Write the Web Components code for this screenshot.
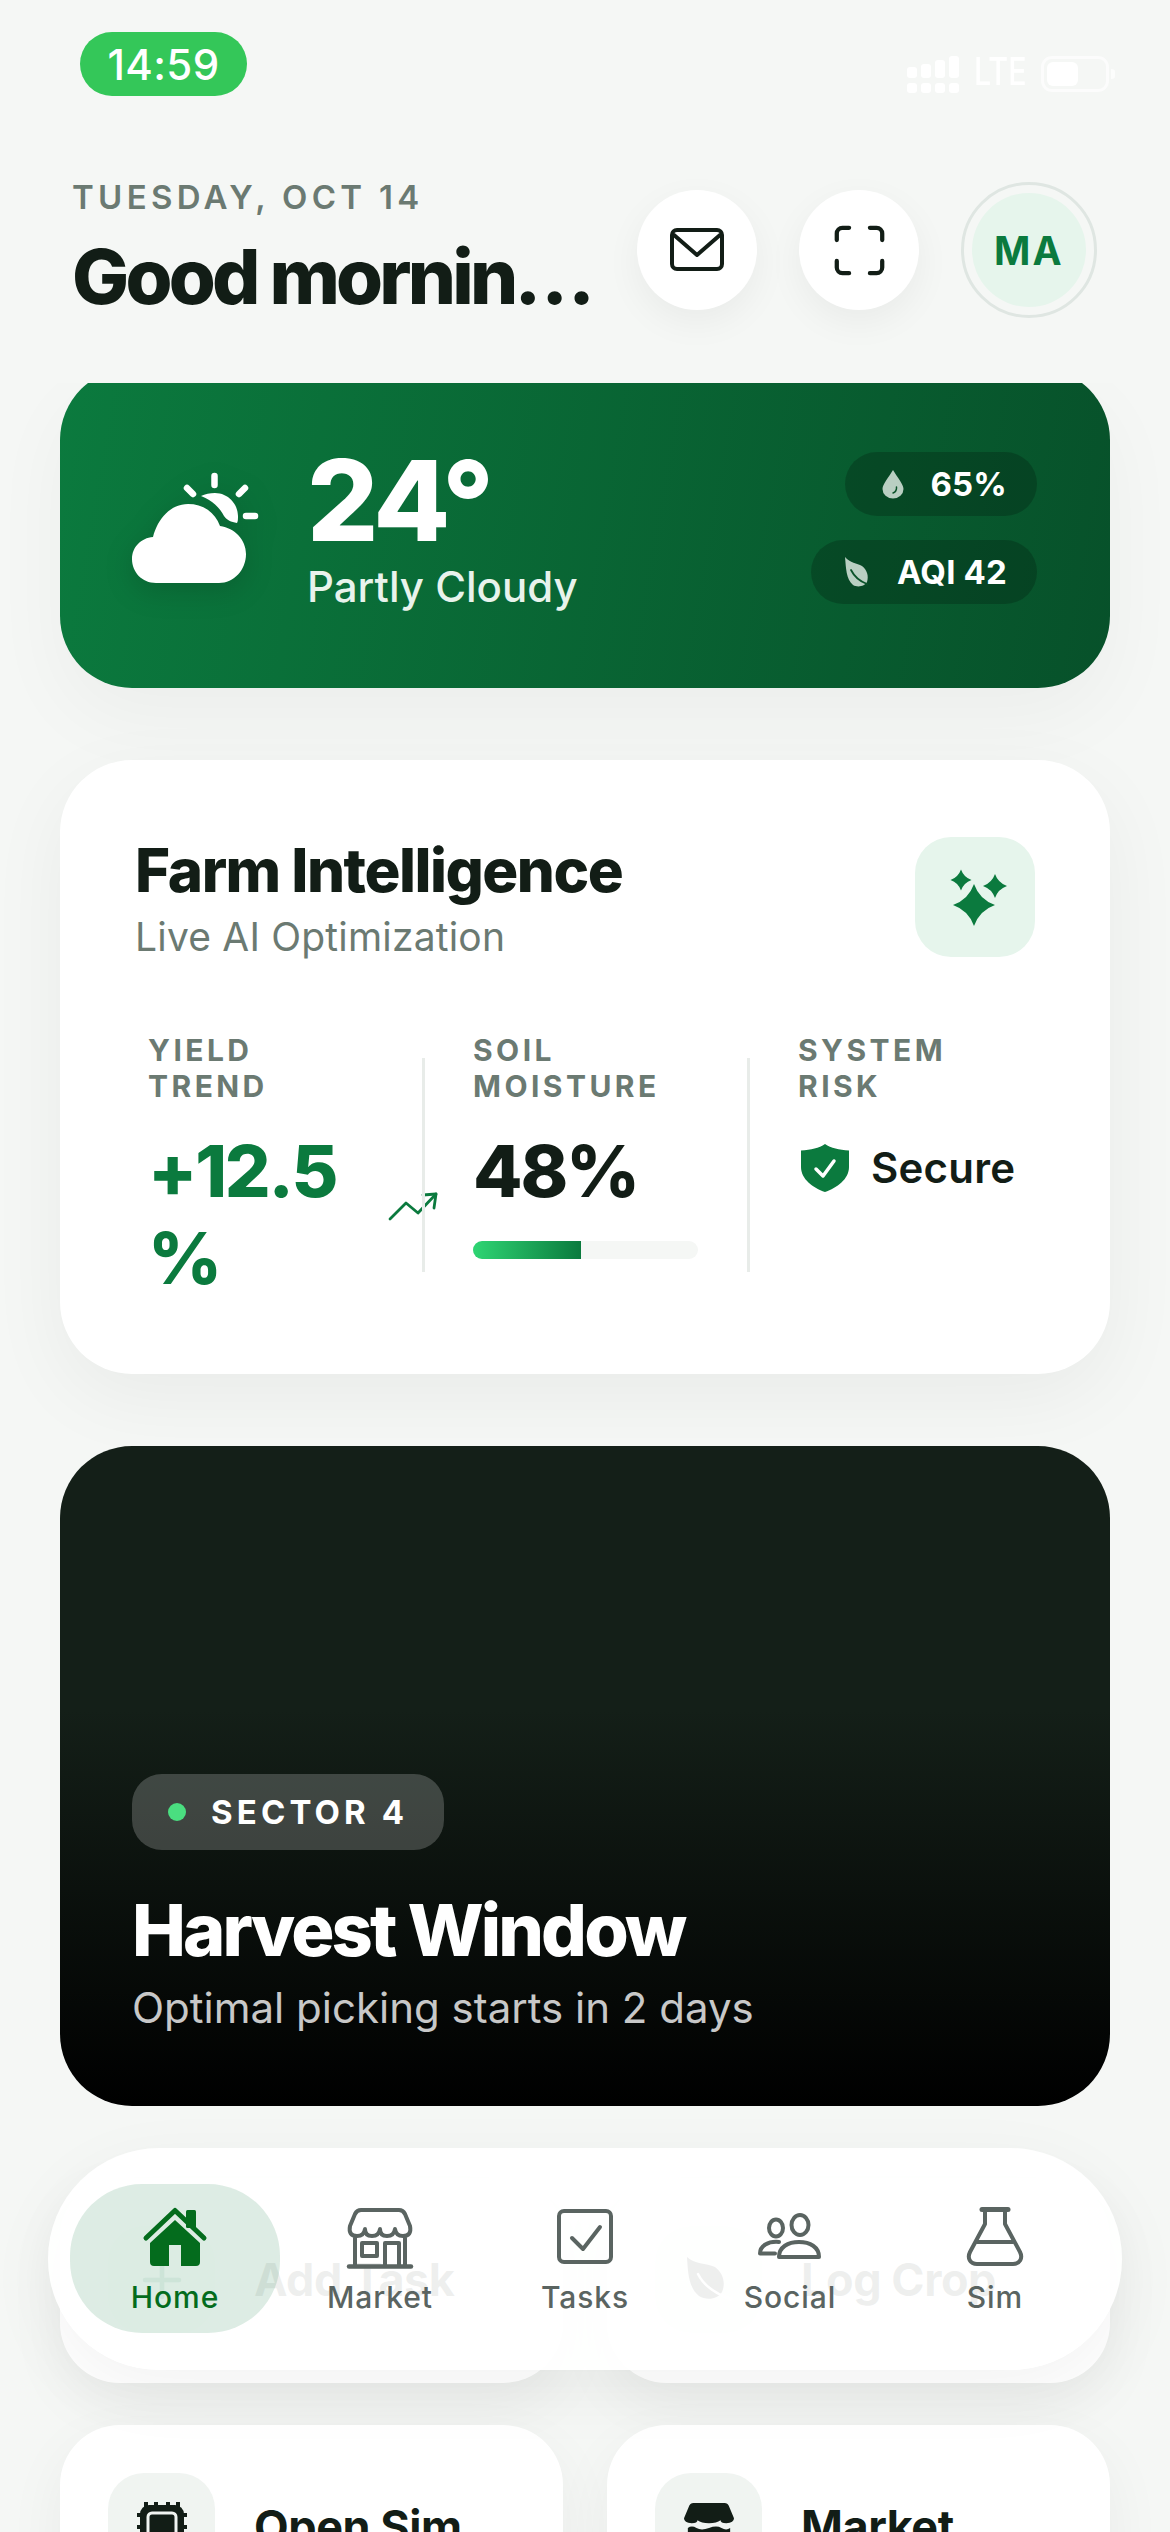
<!doctype html>
<html><head><meta charset="utf-8">
<style>
html,body{margin:0;padding:0;background:#f5f7f5}
body{width:1170px;height:2532px;overflow:hidden;font-family:Inter,"Liberation Sans",sans-serif;color:#121d16}
</style></head><body>
<app-screen>
  <status-bar slot="top"></status-bar>
  <home-header slot="top"></home-header>
  <weather-card></weather-card>
  <farm-card></farm-card>
  <hero-card></hero-card>
  <tile-row first></tile-row>
  <tile-row></tile-row>
  <bottom-nav slot="over"></bottom-nav>
</app-screen>
<script>
const star=(cx,cy,rx,ry)=>{const k=.26;return `M${cx} ${cy-ry}Q${cx+rx*k} ${cy-ry*k} ${cx+rx} ${cy}Q${cx+rx*k} ${cy+ry*k} ${cx} ${cy+ry}Q${cx-rx*k} ${cy+ry*k} ${cx-rx} ${cy}Q${cx-rx*k} ${cy-ry*k} ${cx} ${cy-ry}Z`};
const ICONS={
 mail:['0 0 60 50','<rect x="5" y="5" width="50" height="39" rx="5" fill="none" stroke="currentColor" stroke-width="4"/><path d="M7 10l23 20 23-20" fill="none" stroke="currentColor" stroke-width="4" stroke-linecap="round" stroke-linejoin="round"/>'],
 scan:['0 0 56 56','<path d="M4 17V10a6 6 0 0 1 6-6h7M39 4h7a6 6 0 0 1 6 6v7M52 39v7a6 6 0 0 1-6 6h-7M17 52h-7a6 6 0 0 1-6-6v-7" fill="none" stroke="currentColor" stroke-width="4.5" stroke-linecap="round"/>'],
 weather:['128 468 134 118','<g fill="#fff"><path d="M156 582C142 582 132 571 132 558C132 546 141 537 153 536C158 517 171 503 188 503C203 503 215 511 220 525C235 527 246 539 246 553C246 569 234 582 219 582Z"/><path d="M201 495C205 493 210 492 215 492C228 492 238 503 238 515C238 518 238 520 237 522C231 521 227 519 224 515C220 507 212 499 201 495Z"/></g><g stroke="#fff" stroke-width="6.5" stroke-linecap="round"><path d="M214.5 475V484M187 487l6 6M245 487l-6 6M246 515h9"/></g>'],
 drop:['0 0 24 30','<path d="M12 1C8 8 1.500 15 1.500 20a10.500 9.500 0 0 0 21 0C22.500 15 16 8 12 1Z" fill="#b9cfc2"/><path d="M15.500 18c.3 3-1 5-3.500 6" fill="none" stroke="#0a5229" stroke-width="1.500" stroke-linecap="round"/>'],
 leaf:['0 0 32 32','<path d="M2 1C3 12 3 23 10 29c5 3 12 1 14-3 2-6 0-12-5-16C14 7 7 7 2 1Z" fill="#b9cfc2"/><path d="M8 14c3 6 8 11 16 14" fill="none" stroke="#0a5229" stroke-width="1.800" stroke-linecap="round"/>'],
 sparkles:['940 866 62 62',`<path fill="#0b7a3e" d="${star(970,905,21,21)}${star(957,880,10.500,10.500)}${star(991,886,12,12)}"/>`],
 trend:['0 0 50 32','<path d="M2 29L18 13l12 10L48 4" fill="none" stroke="#0b7a3e" stroke-width="2.800" stroke-linecap="round" stroke-linejoin="round"/><path d="M35 5L48 4l-2 14" fill="none" stroke="#0b7a3e" stroke-width="2.800" stroke-linecap="round" stroke-linejoin="round"/>'],
 shield:['0 0 48 48','<path d="M24 0C30 4 38 6 48 6.500V23C48 35 36 44 24 48 12 44 0 35 0 23V6.500C10 6 18 4 24 0Z" fill="#0b7a3e"/><path d="M15 25l7 7 11-15" fill="none" stroke="#fff" stroke-width="3.500" stroke-linecap="round" stroke-linejoin="round"/>'],
 plus:['0 0 40 40','<path d="M20 3V37M3 20H37" stroke="#0b7a3e" stroke-width="4.500" stroke-linecap="round"/>'],
 leaf2:['0 0 48 48','<path d="M2 1c1 14 1 30 12 39 8 5 19 3 23-4 4-9 1-19-7-25C21 7 9 8 2 1Z" fill="#121d16"/><path d="M13 18c5 10 15 19 33 25" fill="none" stroke="#fff" stroke-width="2.500" stroke-linecap="round"/>'],
 home:['0 0 70 65','<path d="M6 33L35 5.500 64 33" fill="none" stroke="currentColor" stroke-width="5" stroke-linecap="round" stroke-linejoin="round"/><rect x="46" y="5" width="10" height="18" rx="1.500" fill="currentColor"/><path fill-rule="evenodd" fill="currentColor" d="M35 15L60 38V57a4 4 0 0 1-4 4H14a4 4 0 0 1-4-4V38ZM29 40V61H41V40Z"/>'],
 market:['0 0 70 65','<g fill="none" stroke="currentColor" stroke-width="4" stroke-linecap="round" stroke-linejoin="round"><path d="M16 5H54Q58 5 60 9L65 21Q67 31 58 31 51 31 50 24 49 31 42 31 35 31 35 24 34 31 27 31 20 31 20 24 19 31 12 31 3 31 5 21L10 9Q12 5 16 5Z"/><path d="M10 33V60M60 33V60M40 60V38H54V60"/><rect x="17" y="38" width="15" height="13"/></g><path d="M4 61.500H66" stroke="currentColor" stroke-width="4.500" stroke-linecap="round"/>'],
 tasks:['0 0 62 60','<rect x="5" y="4" width="52" height="51" rx="5" fill="none" stroke="currentColor" stroke-width="4"/><path d="M18 31l11 11 17-22" fill="none" stroke="currentColor" stroke-width="4" stroke-linecap="round" stroke-linejoin="round"/>'],
 social:['0 0 70 48','<g fill="none" stroke="currentColor" stroke-width="4" stroke-linejoin="round" stroke-linecap="round"><ellipse cx="21" cy="15" rx="7" ry="8.500"/><ellipse cx="45" cy="12" rx="8.500" ry="10"/><path d="M5 40.500C5 33 13 28 24 29M5 40.500H20"/><path d="M24 44C24 34 33 29 44 29 55 29 64 34 64 44Z"/></g>'],
 flask:['0 0 60 62','<g fill="none" stroke="currentColor" stroke-width="4" stroke-linecap="round" stroke-linejoin="round"><path d="M20 4V18L5 46C2 52 5 58 12 58H48C55 58 58 52 55 46L40 18V4"/><path d="M12 36H48"/></g><path d="M17 3.500H43" stroke="currentColor" stroke-width="5" stroke-linecap="round"/>'],
 chip:['0 0 50 50','<path d="M9 0V6M19 0V6M31 0V6M41 0V6M9 44V50M19 44V50M31 44V50M41 44V50M0 13H6M0 25H6M0 37H6M44 13H50M44 25H50M44 37H50" stroke="#121d16" stroke-width="4"/><rect x="3" y="3" width="44" height="44" rx="9" fill="#121d16"/><rect x="11" y="11" width="28" height="28" rx="4" fill="#121d16" stroke="#f0f4f1" stroke-width="3"/>'],
 store:['0 0 52 50','<path fill="#121d16" d="M10 0H42Q46 0 47 4L52 16Q52 21 44 21 38 21 38 18 34 21 26 21 18 21 14 18 14 21 8 21 0 21 0 16L5 4Q6 0 10 0Z"/><path fill="#121d16" d="M4 26Q8 23 13 26T26 26 39 26 48 26V50H4Z"/>']
};
function def(name,css,html){
  customElements.define(name,class extends HTMLElement{
    constructor(){super();const r=this.attachShadow({mode:'open'});
      r.innerHTML=`<style>:host{box-sizing:border-box}*{box-sizing:border-box}${css}</style>`+(typeof html==='function'?html(this):html);}
  });
}
customElements.define('x-icon',class extends HTMLElement{
  constructor(){super();this.attachShadow({mode:'open'})}
  connectedCallback(){const [vb,body]=ICONS[this.getAttribute('name')];
    this.shadowRoot.innerHTML=`<style>:host{display:block;flex:none;line-height:0}svg{display:block;width:100%;height:100%;overflow:visible}</style><svg viewBox="${vb}" xmlns="http://www.w3.org/2000/svg">${body}</svg>`}
});
def('app-screen',`
 :host{display:flex;flex-direction:column;position:relative;width:1170px;height:2532px;overflow:hidden;background:#f5f7f5}
 .scroll{flex:1;min-height:0;overflow:hidden;padding:0 60px}
 .inner{display:flex;flex-direction:column;gap:72px;margin-top:-15px}
 .over{position:absolute;left:48px;right:48px;top:2148px}
`,`<slot name="top"></slot><div class="scroll"><div class="inner"><slot></slot></div></div><div class="over"><slot name="over"></slot></div>`);
def('status-bar',`
 :host{display:flex;justify-content:space-between;flex:none;height:110px;padding:32px 55px 0 80px}
 .time{width:167px;height:64px;border-radius:32px;background:#34c759;color:#fff;display:flex;align-items:center;justify-content:center;font:500 42px Inter,sans-serif;letter-spacing:.01em}
 .right{display:flex;align-items:flex-start;margin-top:24px;height:38px;gap:15px}
 .sig{display:grid;grid-template-columns:repeat(4,10px);column-gap:4px;align-items:end;row-gap:5px;width:52px}
 .sig i{display:block;background:#fff;border-radius:3px}
 .lte{width:52px;font:500 38px/38px Inter,sans-serif;color:#fff;transform:scaleX(.8);transform-origin:left;margin-top:-4px;margin-left:0}
 .bat{display:flex;align-items:center;gap:2px}
 .bat b{display:block;width:68px;height:36px;border:3px solid rgba(255,255,255,.65);border-radius:11px;padding:3px}
 .bat b::before{content:"";display:block;width:31px;height:24px;background:#fff;border-radius:6px}
 .bat u{display:block;width:4px;height:10px;background:rgba(255,255,255,.7);border-radius:0 3px 3px 0}
`,`<div class="time">14:59</div><div class="right">
 <div class="sig"><i style="height:11px"></i><i style="height:14px"></i><i style="height:18px"></i><i style="height:22px"></i><i style="height:10px"></i><i style="height:10px"></i><i style="height:10px"></i><i style="height:10px"></i></div>
 <div class="lte">LTE</div><div class="bat"><b></b><u></u></div></div>`);
def('round-btn',`
 :host{display:flex;align-items:center;justify-content:center;flex:none;width:120px;height:120px;border-radius:50%;background:#fff;color:#121d16;box-shadow:0 12px 36px rgba(18,29,22,.05)}
`,`<slot></slot>`);
def('home-header',`
 :host{display:flex;align-items:center;flex:none;height:273px;padding:7px 73px 0 72px}
 .txt{flex:1;min-width:0;padding-bottom:4px}
 .date{font:600 33px/38px Inter,sans-serif;letter-spacing:.13em;color:#6b7a72;white-space:nowrap}
 .hi{font:800 76px/84px Inter,sans-serif;letter-spacing:-.05em;color:#121d16;white-space:nowrap;overflow:hidden;text-overflow:ellipsis;margin-top:18px}
 .acts{display:flex;align-items:center;gap:42px;margin-left:24px}
 .av{width:136px;height:136px;border-radius:50%;border:3px solid #dfe6e2;padding:8px;flex:none}
 .av div{width:100%;height:100%;border-radius:50%;background:#e6f5ec;color:#0b7a3e;font:700 39px Inter,sans-serif;letter-spacing:.06em;display:flex;align-items:center;justify-content:center}
`,`<div class="txt"><div class="date">TUESDAY, OCT 14</div><div class="hi">Good morning, Marcus</div></div>
<div class="acts"><round-btn><x-icon name="mail" style="width:60px;height:50px"></x-icon></round-btn><round-btn><x-icon name="scan" style="width:53px;height:53px"></x-icon></round-btn><div class="av"><div>MA</div></div></div>`);
def('weather-card',`
 :host{display:flex;align-items:center;flex:none;height:320px;border-radius:72px;padding:0 73px 0 68px;background:linear-gradient(100deg,#0b7a3e,#07512a);color:#fff;box-shadow:0 30px 80px rgba(18,29,22,.04)}
 .ic{width:134px;height:118px;filter:drop-shadow(0 8px 14px rgba(0,0,0,.14))}
 .main{flex:1;margin-left:45px;padding-top:10px}
 .t{font:800 112px/108px Inter,sans-serif;letter-spacing:-.03em;margin-top:-8px}
 .s{font:500 42px/52px Inter,sans-serif;color:#e8f3ec;margin-top:7px}
 .pills{display:flex;flex-direction:column;align-items:flex-end;gap:24px}
 .p{display:flex;align-items:center;height:64px;border-radius:32px;background:rgba(0,0,0,.2);padding:0 30px 0 36px;font:700 33px Inter,sans-serif;gap:25px;letter-spacing:.005em}
`,`<x-icon class="ic" name="weather"></x-icon><div class="main"><div class="t">24°</div><div class="s">Partly Cloudy</div></div>
<div class="pills"><div class="p"><x-icon name="drop" style="width:24px;height:30px"></x-icon>65%</div><div class="p" style="padding-left:32px;gap:22px"><x-icon name="leaf" style="width:32px;height:32px"></x-icon>AQI 42</div></div>`);
def('farm-card',`
 :host{display:block;flex:none;border-radius:72px;background:#fff;padding:77px 75px 73px;box-shadow:0 24px 80px rgba(18,29,22,.05)}
 .head{display:flex;justify-content:space-between;align-items:flex-start}
 h2{margin:0;font:800 60px/70px Inter,sans-serif;letter-spacing:-.025em;margin-top:-2px}
 p{margin:8px 0 0;font:400 39px/48px Inter,sans-serif;color:#6b7a72;letter-spacing:.005em}
 .tile{width:120px;height:120px;border-radius:36px;background:#e6f5ec;display:flex;align-items:center;justify-content:center}
 .stats{display:flex;margin-top:71px}
 .st{width:274px;flex:none}
 .st:first-child{margin-left:13px}
 .st.n{margin-left:48px}
 .dv{width:3px;height:214px;margin-top:26px;background:#e8ece9;flex:none}
 .l{font:700 30px/36px Inter,sans-serif;letter-spacing:.115em;color:#6b7a72}
 .v{display:flex;align-items:center;gap:24px;margin-top:23px}
 .n1{font:800 72px/87px Inter,sans-serif;letter-spacing:-.03em;color:#0b7a3e;min-width:0}
 .n2{font:800 72px/87px Inter,sans-serif;letter-spacing:-.03em;margin-top:23px}
 .bar{width:225px;height:18px;border-radius:9px;background:#f5f7f5;margin-top:27px;overflow:hidden}
 .bar i{display:block;width:48%;height:100%;background:linear-gradient(90deg,#2ed573,#0b7a3e)}
 .sec{display:flex;align-items:center;gap:22px;margin-top:34px;font:600 42px/60px Inter,sans-serif;letter-spacing:.005em;padding-left:3px}
`,`<div class="head"><div><h2>Farm Intelligence</h2><p>Live AI Optimization</p></div><div class="tile"><x-icon name="sparkles" style="width:62px;height:62px"></x-icon></div></div>
<div class="stats">
 <div class="st"><div class="l">YIELD<br>TREND</div><div class="v"><div class="n1">+12.5 %</div><x-icon name="trend" style="width:50px;height:32px;margin:-16px -16px 0 0"></x-icon></div></div>
 <div class="dv"></div>
 <div class="st n"><div class="l">SOIL<br>MOISTURE</div><div class="n2">48%</div><div class="bar"><i></i></div></div>
 <div class="dv"></div>
 <div class="st n"><div class="l">SYSTEM<br>RISK</div><div class="sec"><x-icon name="shield" style="width:48px;height:48px"></x-icon>Secure</div></div>
</div>`);
def('hero-card',`
 :host{display:flex;flex-direction:column;justify-content:flex-end;align-items:flex-start;flex:none;height:660px;border-radius:72px;padding:0 72px 72px;color:#fff;background:linear-gradient(180deg,#141f18 0%,#141f18 40%,#000 100%)}
 .tag{display:flex;align-items:center;gap:25px;height:76px;border-radius:30px;padding:0 36px;background:rgba(255,255,255,.2);font:700 33px Inter,sans-serif;letter-spacing:.125em}
 .tag i{width:18px;height:18px;border-radius:50%;background:#4ade80}
 h2{margin:38px 0 0;font:800 72px/84px Inter,sans-serif;letter-spacing:-.04em}
 p{margin:10px 0 0;font:400 42px/52px Inter,sans-serif;color:rgba(255,255,255,.78)}
`,`<div class="tag"><i></i>SECTOR 4</div><h2>Harvest Window</h2><p>Optimal picking starts in 2 days</p>`);
def('tile-card',`
 :host{display:flex;align-items:flex-start;gap:39px;height:205px;border-radius:60px;background:#fff;padding:48px;font:700 45px/107px Inter,sans-serif;letter-spacing:-.01em;color:#121d16;box-shadow:0 20px 60px rgba(18,29,22,.05)}
 .t{width:107px;height:107px;border-radius:36px;background:var(--tile,#f0f4f1);display:flex;align-items:center;justify-content:center;flex:none}
`,`<div class="t"><slot name="icon"></slot></div><slot></slot>`);
def('tile-row',`
 :host{display:grid;grid-template-columns:503px 503px;gap:44px;flex:none}
 :host(:not([first])){margin-top:-30px}
`,h=>h.hasAttribute('first')
 ?`<tile-card style="--tile:#e6f5ec"><x-icon slot="icon" name="plus" style="width:40px;height:40px"></x-icon>Add Task</tile-card><tile-card><x-icon slot="icon" name="leaf2" style="width:48px;height:48px"></x-icon>Log Crop</tile-card>`
 :`<tile-card><x-icon slot="icon" name="chip" style="width:50px;height:50px"></x-icon>Open Sim</tile-card><tile-card><x-icon slot="icon" name="store" style="width:50px;height:50px"></x-icon>Market</tile-card>`);
def('nav-item',`
 :host{display:flex;flex-direction:column;align-items:center;height:149px;padding-top:22px;border-radius:72px;color:#5a6461;font:500 30px/40px Inter,sans-serif;letter-spacing:.03em}
 :host([active]){background:rgba(11,122,62,.14);color:#046c1d;margin:0 -2.5px}
 .i{height:62px;display:flex;align-items:center;justify-content:center}
 .l{margin-top:9px}
`,h=>`<div class="i"><slot></slot></div><div class="l">${h.getAttribute('label')}</div>`);
def('bottom-nav',`
 :host{display:grid;grid-template-columns:repeat(5,205px);height:222px;border-radius:111px;padding:36px 24.5px 37px;background:rgba(255,255,255,.93);box-shadow:0 20px 70px rgba(18,29,22,.05)}
`,`<nav-item active label="Home"><x-icon name="home" style="width:70px;height:65px"></x-icon></nav-item>
<nav-item label="Market"><x-icon name="market" style="width:70px;height:65px"></x-icon></nav-item>
<nav-item label="Tasks"><x-icon name="tasks" style="width:62px;height:60px"></x-icon></nav-item>
<nav-item label="Social"><x-icon name="social" style="width:70px;height:48px"></x-icon></nav-item>
<nav-item label="Sim"><x-icon name="flask" style="width:60px;height:62px"></x-icon></nav-item>`);
</script>
</body></html>
